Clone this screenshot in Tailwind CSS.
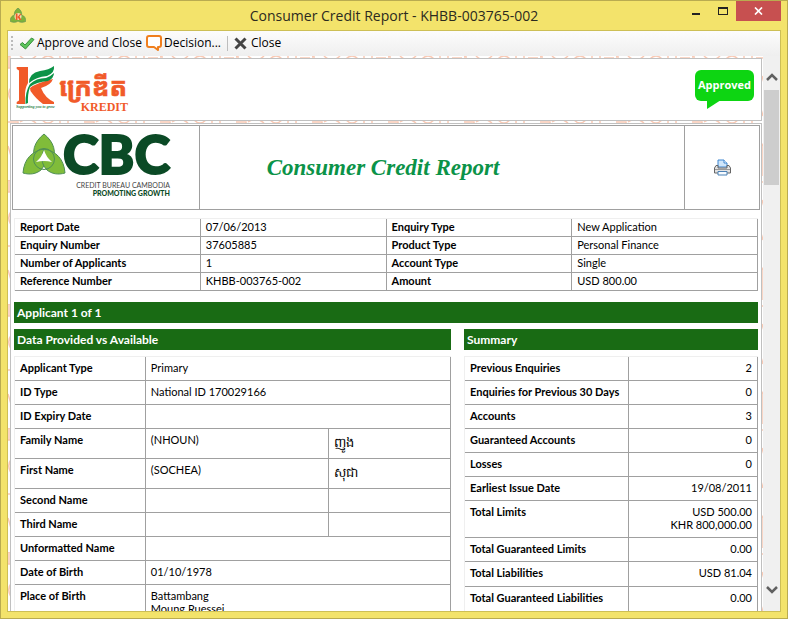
<!DOCTYPE html>
<html lang="en">
<head>
<meta charset="utf-8">
<meta name="viewport" content="width=device-width, initial-scale=1">
<title>Consumer Credit Report - KHBB-003765-002</title>
<script src="https://cdn.jsdelivr.net/npm/@tailwindcss/browser@4"></script>
</head>
<body class="flex h-screen flex-col overflow-hidden border border-[#b9ab50] bg-[#f3e36b] px-[6px] pb-[6px] font-['Open_Sans','Noto_Sans',sans-serif] text-black">

<!-- Title bar -->
<header class="relative flex h-[29px] shrink-0 items-center justify-center">
  <svg class="absolute left-[3px] top-[7px] h-[15px] w-[16px]" viewBox="0 0 16 15" aria-hidden="true">
    <path d="M8 0C11 2 12 5 11.500 7C15 8 16 11 15.500 13.500C12.500 14.800 10 14.500 8 13C6 14.500 3.500 14.800.500 13.500C0 11 1 8 4.500 7C4 5 5 2 8 0Z" fill="#7db33b" stroke="#5f8f55" stroke-width=".7"/>
    <circle cx="8" cy="8.500" r="3.500" fill="#f2dfb0"/>
    <path d="M5.800 5.500H7.500V12H5.800Z M7.500 9L10 6H11.500L9.500 8.500L11.500 12H9.500Z" fill="#f0592a"/>
  </svg>
  <h1 class="text-[14px] leading-[20px] text-[#2b2a20]">Consumer Credit Report - KHBB-003765-002</h1>
  <div class="absolute right-0 top-0 flex h-[20px]">
    <button type="button" aria-label="Minimize" class="flex w-[26px] justify-center pt-[12px]"><span class="h-[2px] w-[8px] bg-[#222]"></span></button>
    <button type="button" aria-label="Maximize" class="flex w-[27px] justify-center pt-[6px]"><span class="h-[8px] w-[10px] border border-t-2 border-[#222]"></span></button>
    <button type="button" aria-label="Close window" class="flex w-[45px] items-center justify-center bg-[#c75050]">
      <svg class="h-[8px] w-[9px]" viewBox="0 0 9 8" aria-hidden="true"><path d="M1 .500L8 7.500M8 .500L1 7.500" stroke="#fff" stroke-width="1.700"/></svg>
    </button>
  </div>
</header>

<main class="flex min-h-0 grow flex-col border border-[#cdbf55] bg-white">
  <!-- Toolbar -->
  <nav class="flex h-[25px] shrink-0 items-center bg-linear-to-b from-[#fcfcfc] to-[#efefef] pb-[1px] text-[12px] leading-[16px]">
    <span class="ml-[3px] grid gap-[2px]"><i class="size-[2px] bg-[#bbb]"></i><i class="size-[2px] bg-[#bbb]"></i><i class="size-[2px] bg-[#bbb]"></i><i class="size-[2px] bg-[#bbb]"></i></span>
    <button type="button" class="ml-[6px] flex items-center gap-[2px] whitespace-nowrap">
      <svg class="h-[13px] w-[16px]" viewBox="0 0 16 13" aria-hidden="true"><path d="M1 7.500L3.500 5.500L6 8L12.500 1L15 2.500L6.500 12Z" fill="#5cc45c" stroke="#3a8f3e" stroke-linejoin="round"/></svg>
      Approve and Close
    </button>
    <button type="button" class="ml-[4px] flex items-center gap-[2px] whitespace-nowrap">
      <svg class="size-[16px]" viewBox="0 0 16 16" aria-hidden="true"><path d="M3 1H13Q15 1 15 3V10Q15 12 13 12H12V15L8 12H3Q1 12 1 10V3Q1 1 3 1Z" fill="#fff" stroke="#f07f1e" stroke-width="2" stroke-linejoin="round"/></svg>
      Decision...
    </button>
    <span class="ml-[6px] h-[15px] w-px bg-[#bdbdbd]"></span>
    <button type="button" class="ml-[6px] flex items-center gap-[4px]">
      <svg class="size-[13px]" viewBox="0 0 13 13" aria-hidden="true"><path d="M1.500 1.500L11.500 11.500M11.500 1.500L1.500 11.500" stroke="#444" stroke-width="3"/></svg>
      Close
    </button>
  </nav>

  <div class="flex min-h-0 grow">
    <div class="relative min-w-0 grow overflow-hidden">
      <svg class="absolute inset-0 h-full w-full" aria-hidden="true">
        <defs><pattern id="motif" width="76" height="124" patternUnits="userSpaceOnUse">
          <path d="M0 0H2V12H0ZM0 66H10V72M4 30Q-4 40 8 50M0 90L6 110M12 0Q20 8 28 0M34 3Q40-3 46 3M52 0V6H60V0M64 2H74M12 66Q20 60 28 67M34 64Q40 70 46 64M52 63V68H60V63M70 20L76 40L70 60M76 80L70 90V120" fill="none" stroke="#f9c9b4" stroke-width="1.500"/>
        </pattern></defs>
        <rect width="100%" height="100%" fill="#fff"/><rect width="100%" height="100%" fill="url(#motif)"/>
      </svg>
      <div class="relative ml-[2px] mr-[1px] mt-[2px] flex flex-col gap-[2px]">

        <!-- Lender banner -->
        <section class="flex h-[63px] items-start justify-between border border-[#c0c0c0] bg-white pl-[5px] pr-[7px]">
          <svg class="mt-[5px] h-[50px] w-[124px]" viewBox="0 0 124 50" role="img" aria-label="Kredit">
            <g fill="#f15a29">
              <path d="M.700 3H12V19Q9 24 9 31V40H.700V38L3 36.500V6.500L.700 5Z"/>
              <path d="M14 24Q20 19 37 15Q35 21 25 24Q29 34 38 38V40H27Q20 35 14.500 27Z"/>
            </g>
            <path d="M13 19Q13 9 24 7Q33 6 38 2Q39 9 31 12Q20 13 13 19Z" fill="#0c9347"/>
            <path d="M9.500 40Q9 28 14 20Q20 14 30 14Q35 12 38 9Q38 14 32 17Q20 18 14 23Q11.500 30 12 39Z" fill="#0c9347"/>
            <text x="0" y="44" font-size="4" font-style="italic" font-weight="700" font-family="Liberation Serif, serif" fill="#187a48">Supporting you to grow</text>
            <text x="43" y="32" font-size="26" font-weight="700" font-family="Noto Sans Khmer, Noto Sans, sans-serif" fill="#f15a29" stroke="#f15a29" stroke-width=".6">ក្រេឌីត</text>
            <text x="112" y="47" text-anchor="end" font-size="12" font-weight="700" font-family="Liberation Serif, serif" fill="#f15a29">KREDIT</text>
          </svg>
          <div class="relative mt-[11px] flex h-[31px] w-[59px] items-center justify-center rounded-[6px] bg-[#0dd512] text-[11px] font-bold text-white">
            Approved
            <svg class="absolute left-[12px] top-[30px] h-[9px] w-[14px]" viewBox="0 0 14 9" aria-hidden="true"><path d="M0 0H14L0 9Z" fill="#0dd512"/></svg>
          </div>
        </section>

        <!-- Report -->
        <section class="border border-[#c0c0c0] bg-white p-[1px] pb-[20px] font-['Lato','Noto_Sans',sans-serif] text-[11px] leading-[13px]">
          <div class="grid h-[85px] grid-cols-[187px_1fr_74px] divide-x divide-[#a0a0a0] border border-[#a0a0a0]">
            <div class="flex items-start pl-[9px] pt-[6px]">
              <svg class="h-[70px] w-[160px]" viewBox="0 0 160 70" role="img" aria-label="CBC Credit Bureau Cambodia">
                <g fill="#80bc3a" stroke="#4f8f55" stroke-width="1">
                  <path d="M22 2C32 10 35 20 30 31C25 34 19 34 14 31C9 20 12 10 22 2Z"/>
                  <path d="M1 41C2 27 10 19 22 17C24 24 25 31 19 38C14 42 8 43 1 41Z"/>
                  <path d="M43 41C42 27 34 19 22 17C19 25 19 32 25 38C30 42 36 43 43 41Z"/>
                </g>
                <circle cx="22" cy="27" r="10.500" fill="none" stroke="#4f8f55"/>
                <path d="M22 18Q24 25 30 30Q22 28 14 30Q20 25 22 18Z" fill="#fff"/>
                <text x="41" y="42" font-size="54" font-weight="900" font-family="Lato, sans-serif" fill="#0b4a26" stroke="#0b4a26" stroke-width="2">CBC</text>
                <text x="148" y="56" text-anchor="end" font-size="7" font-family="Lato, sans-serif" fill="#444">CREDIT BUREAU CAMBODIA</text>
                <text x="148" y="64" text-anchor="end" font-size="7" font-weight="900" font-family="Lato, sans-serif" fill="#0b4a26">PROMOTING GROWTH</text>
              </svg>
            </div>
            <h2 class="flex items-center justify-center whitespace-nowrap pr-[118px] font-['Liberation_Serif',serif] text-[23px] font-bold italic text-[#0b9348]">Consumer Credit Report</h2>
            <button type="button" aria-label="Print" class="flex items-center justify-center">
              <svg class="h-[17px] w-[17px]" viewBox="0 0 17 17" aria-hidden="true">
                <path d="M4 8V1H10L13 4V8Z" fill="#cfe6fb" stroke="#3f86d0"/><path d="M10 1V4H13" fill="#fff" stroke="#3f86d0"/>
                <path d="M2 6.500H4V9H13V6.500H15L16.500 9V14H.500V9Z" fill="#e2e2e2" stroke="#666"/>
                <path d="M1 10.500H16" stroke="#999"/><path d="M4 12.500H13V16H4Z" fill="#f7fbff" stroke="#4b81b5"/>
              </svg>
            </button>
          </div>

          <div class="mx-[2px] mt-[8px]">
            <table class="w-full table-fixed border-separate border-spacing-0 border-l border-t border-[#efefef] text-left [&_td]:border-b [&_td]:border-r [&_td]:border-[#a0a0a0] [&_td]:px-[5px] [&_td]:pb-[3px] [&_td]:pt-[1px] [&_th]:border-b [&_th]:border-r [&_th]:border-[#a0a0a0] [&_th]:px-[5px] [&_th]:pb-[3px] [&_th]:pt-[1px] [&_th]:font-bold">
              <tbody>
                <tr><th>Report Date</th><td>07/06/2013</td><th>Enquiry Type</th><td>New Application</td></tr>
                <tr><th>Enquiry Number</th><td>37605885</td><th>Product Type</th><td>Personal Finance</td></tr>
                <tr><th>Number of Applicants</th><td>1</td><th>Account Type</th><td>Single</td></tr>
                <tr><th>Reference Number</th><td>KHBB-003765-002</td><th>Amount</th><td>USD 800.00</td></tr>
              </tbody>
            </table>

            <h3 class="mt-[11px] bg-[#196b14] px-[3px] text-[12px] font-bold leading-[21px] text-white">Applicant 1 of 1</h3>

            <div class="mt-[6px] grid grid-cols-[437fr_294fr] items-start gap-x-[13px]">
              <div>
                <h3 class="bg-[#196b14] px-[3px] text-[12px] font-bold leading-[21px] text-white">Data Provided vs Available</h3>
                <table class="mt-[6px] w-full table-fixed border-separate border-spacing-0 border-l border-t border-[#efefef] text-left [&_td]:border-b [&_td]:border-r [&_td]:border-[#a0a0a0] [&_td]:px-[5px] [&_td]:pb-[6px] [&_td]:pt-[4px] [&_td]:align-top [&_th]:border-b [&_th]:border-r [&_th]:border-[#a0a0a0] [&_th]:px-[5px] [&_th]:pb-[6px] [&_th]:pt-[4px] [&_th]:align-top [&_th]:font-bold">
                  <colgroup><col class="w-[30%]"><col class="w-[42%]"><col></colgroup>
                  <tbody>
                    <tr class="h-[24px]"><th>Applicant Type</th><td colspan="2">Primary</td></tr>
                    <tr class="h-[24px]"><th>ID Type</th><td colspan="2">National ID 170029166</td></tr>
                    <tr class="h-[24px]"><th>ID Expiry Date</th><td colspan="2"></td></tr>
                    <tr class="h-[30px]"><th>Family Name</th><td>(NHOUN)</td><td><span lang="km" class="text-[13px] leading-[19px]">ញូង</span></td></tr>
                    <tr class="h-[30px]"><th>First Name</th><td>(SOCHEA)</td><td><span lang="km" class="text-[13px] leading-[19px]">សុជា</span></td></tr>
                    <tr class="h-[24px]"><th>Second Name</th><td></td><td></td></tr>
                    <tr class="h-[24px]"><th>Third Name</th><td></td><td></td></tr>
                    <tr class="h-[24px]"><th>Unformatted Name</th><td colspan="2"></td></tr>
                    <tr class="h-[24px]"><th>Date of Birth</th><td colspan="2">01/10/1978</td></tr>
                    <tr><th>Place of Birth</th><td colspan="2">Battambang<br>Moung Ruessei</td></tr>
                  </tbody>
                </table>
              </div>
              <div>
                <h3 class="bg-[#196b14] px-[3px] text-[12px] font-bold leading-[21px] text-white">Summary</h3>
                <table class="mt-[6px] w-full table-fixed border-separate border-spacing-0 border-l border-t border-[#efefef] [&_td]:border-b [&_td]:border-r [&_td]:border-[#a0a0a0] [&_td]:px-[5px] [&_td]:pb-[6px] [&_td]:pt-[4px] [&_td]:text-right [&_td]:align-top [&_th]:whitespace-nowrap [&_th]:border-b [&_th]:border-r [&_th]:border-[#a0a0a0] [&_th]:px-[5px] [&_th]:pb-[6px] [&_th]:pt-[4px] [&_th]:text-left [&_th]:align-top [&_th]:font-bold">
                  <colgroup><col class="w-[56%]"><col></colgroup>
                  <tbody>
                    <tr><th>Previous Enquiries</th><td>2</td></tr>
                    <tr><th>Enquiries for Previous 30 Days</th><td>0</td></tr>
                    <tr><th>Accounts</th><td>3</td></tr>
                    <tr><th>Guaranteed Accounts</th><td>0</td></tr>
                    <tr><th>Losses</th><td>0</td></tr>
                    <tr><th>Earliest Issue Date</th><td>19/08/2011</td></tr>
                    <tr><th>Total Limits</th><td>USD 500.00<br>KHR 800,000.00</td></tr>
                    <tr><th>Total Guaranteed Limits</th><td>0.00</td></tr>
                    <tr class="h-[25px]"><th>Total Liabilities</th><td>USD 81.04</td></tr>
                    <tr class="h-[25px]"><th>Total Guaranteed Liabilities</th><td>0.00</td></tr>
                  </tbody>
                </table>
              </div>
            </div>
          </div>
        </section>
      </div>
    </div>

    <!-- Scroll bar -->
    <div class="flex w-[17px] shrink-0 flex-col items-center bg-[#f0f0f0]">
      <svg class="mt-[16px] h-[10px] w-[12px] shrink-0" viewBox="0 0 12 10" aria-hidden="true"><path d="M1 8L6 3L11 8" fill="none" stroke="#606060" stroke-width="2.500"/></svg>
      <div class="mt-[8px] h-[95px] w-[15px] shrink-0 bg-[#cdcdcd]"></div>
      <svg class="mb-[16px] mt-auto h-[10px] w-[12px] shrink-0" viewBox="0 0 12 10" aria-hidden="true"><path d="M1 2L6 7L11 2" fill="none" stroke="#606060" stroke-width="2.500"/></svg>
    </div>
  </div>
</main>
</body>
</html>
